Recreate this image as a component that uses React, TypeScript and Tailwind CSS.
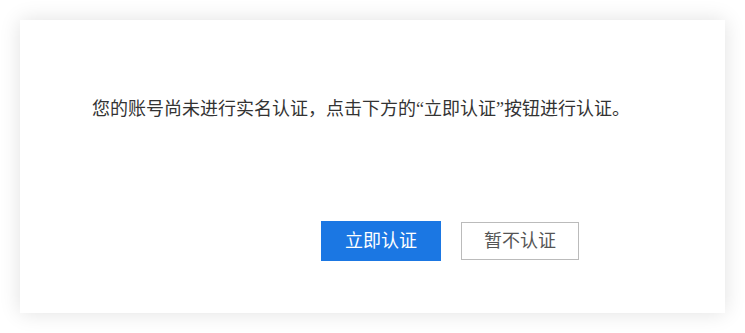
export default function App() {
  return (
    <div className="w-[745px] h-[333px] bg-white pt-[20px] pl-[20px]">
      <div
        className="w-[705px] h-[293px] bg-white shadow-[0_0_20px_rgba(0,0,0,0.12)] flex flex-col"
        style={{ fontFamily: '"Liberation Serif", "Noto Sans CJK SC", serif' }}
      >
        <p className="mt-[75px] ml-[72px] text-[18px] leading-[28px] text-[#333333]">
          您的账号尚未进行实名认证，点击下方的“立即认证”按钮进行认证。
        </p>
        <div className="mt-[98px] ml-[301px] flex items-center gap-[20px]">
          <button className="w-[120px] h-[40px] bg-[#1b77e3] text-white text-[18px]">
            立即认证
          </button>
          <button className="w-[118px] h-[38px] border border-[#bbbbbb] bg-white text-[#555555] text-[18px]">
            暂不认证
          </button>
        </div>
      </div>
    </div>
  )
}
